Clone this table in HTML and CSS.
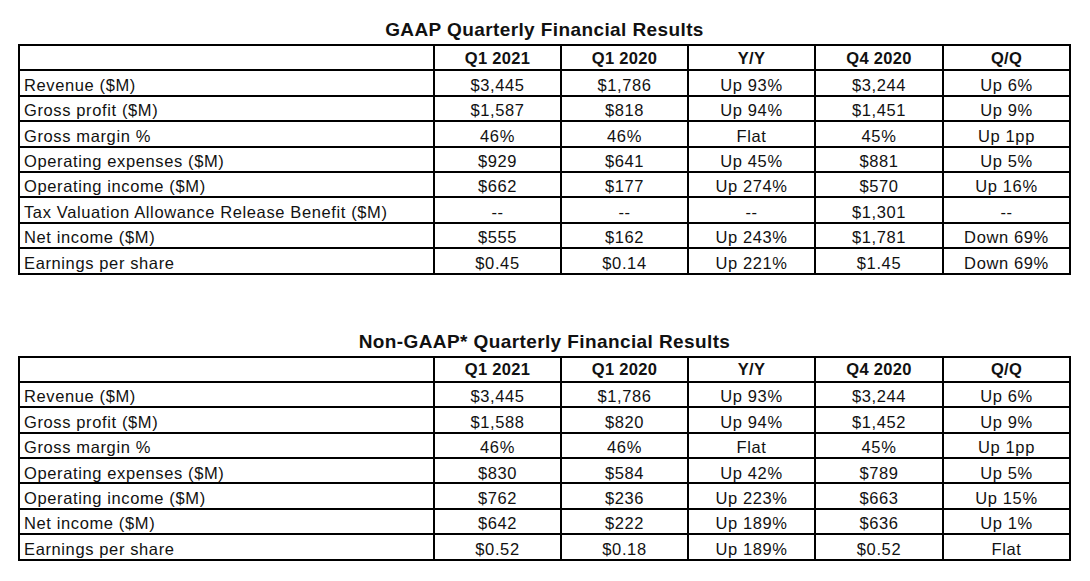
FILE: index.html
```html
<!DOCTYPE html>
<html lang="en">
<head>
<meta charset="utf-8">
<title>Quarterly Financial Results</title>
<link rel="stylesheet" href="styles.css">
</head>
<body>
<main class="page">
  <section class="block">
    <h2 class="title">GAAP Quarterly Financial Results</h2>
    <div class="fin">
      <div class="hd"></div><div class="hd c">Q1 2021</div><div class="hd c">Q1 2020</div><div class="hd c">Y/Y</div><div class="hd c">Q4 2020</div><div class="hd c">Q/Q</div>
      <div>Revenue ($M)</div><div class="c">$3,445</div><div class="c">$1,786</div><div class="c">Up 93%</div><div class="c">$3,244</div><div class="c">Up 6%</div>
      <div>Gross profit ($M)</div><div class="c">$1,587</div><div class="c">$818</div><div class="c">Up 94%</div><div class="c">$1,451</div><div class="c">Up 9%</div>
      <div>Gross margin %</div><div class="c">46%</div><div class="c">46%</div><div class="c">Flat</div><div class="c">45%</div><div class="c">Up 1pp</div>
      <div>Operating expenses ($M)</div><div class="c">$929</div><div class="c">$641</div><div class="c">Up 45%</div><div class="c">$881</div><div class="c">Up 5%</div>
      <div>Operating income ($M)</div><div class="c">$662</div><div class="c">$177</div><div class="c">Up 274%</div><div class="c">$570</div><div class="c">Up 16%</div>
      <div>Tax Valuation Allowance Release Benefit ($M)</div><div class="c">--</div><div class="c">--</div><div class="c">--</div><div class="c">$1,301</div><div class="c">--</div>
      <div>Net income ($M)</div><div class="c">$555</div><div class="c">$162</div><div class="c">Up 243%</div><div class="c">$1,781</div><div class="c">Down 69%</div>
      <div>Earnings per share</div><div class="c">$0.45</div><div class="c">$0.14</div><div class="c">Up 221%</div><div class="c">$1.45</div><div class="c">Down 69%</div>
    </div>
  </section>
  <section class="block second">
    <h2 class="title">Non-GAAP* Quarterly Financial Results</h2>
    <div class="fin">
      <div class="hd"></div><div class="hd c">Q1 2021</div><div class="hd c">Q1 2020</div><div class="hd c">Y/Y</div><div class="hd c">Q4 2020</div><div class="hd c">Q/Q</div>
      <div>Revenue ($M)</div><div class="c">$3,445</div><div class="c">$1,786</div><div class="c">Up 93%</div><div class="c">$3,244</div><div class="c">Up 6%</div>
      <div>Gross profit ($M)</div><div class="c">$1,588</div><div class="c">$820</div><div class="c">Up 94%</div><div class="c">$1,452</div><div class="c">Up 9%</div>
      <div>Gross margin %</div><div class="c">46%</div><div class="c">46%</div><div class="c">Flat</div><div class="c">45%</div><div class="c">Up 1pp</div>
      <div>Operating expenses ($M)</div><div class="c">$830</div><div class="c">$584</div><div class="c">Up 42%</div><div class="c">$789</div><div class="c">Up 5%</div>
      <div>Operating income ($M)</div><div class="c">$762</div><div class="c">$236</div><div class="c">Up 223%</div><div class="c">$663</div><div class="c">Up 15%</div>
      <div>Net income ($M)</div><div class="c">$642</div><div class="c">$222</div><div class="c">Up 189%</div><div class="c">$636</div><div class="c">Up 1%</div>
      <div>Earnings per share</div><div class="c">$0.52</div><div class="c">$0.18</div><div class="c">Up 189%</div><div class="c">$0.52</div><div class="c">Flat</div>
    </div>
  </section>
</main>
</body>
</html>
```
FILE: styles.css
```css
html, body {
  margin: 0;
  padding: 0;
  background: #fff;
}
body {
  font-family: "Liberation Sans", Arial, sans-serif;
  color: #111;
}
.page {
  padding: 19px 0 0 18px;
}
.block {
  width: 1053px;
}
.second {
  margin-top: 56px;
}
.title {
  margin: 0 0 3px;
  height: 22px;
  font-size: 19px;
  line-height: 22px;
  font-weight: bold;
  letter-spacing: 0.4px;
  text-align: center;
  color: #111;
}
.fin {
  display: grid;
  grid-template-columns: 415px 127px 127px 127px 128px 127px;
  grid-auto-rows: 25.4px;
  border-left: 2px solid #000;
  border-top: 2px solid #000;
  width: max-content;
}
.fin > div {
  box-sizing: border-box;
  border-right: 2px solid #000;
  border-bottom: 2px solid #000;
  padding: 4.5px 0 0 4px;
  font-size: 16.5px;
  line-height: 18px;
  letter-spacing: 0.62px;
  white-space: nowrap;
}
.fin > .c {
  text-align: center;
  padding-left: 0;
}
.fin > .hd {
  padding-top: 2.6px;
  font-weight: bold;
  letter-spacing: 0.3px;
}
```
